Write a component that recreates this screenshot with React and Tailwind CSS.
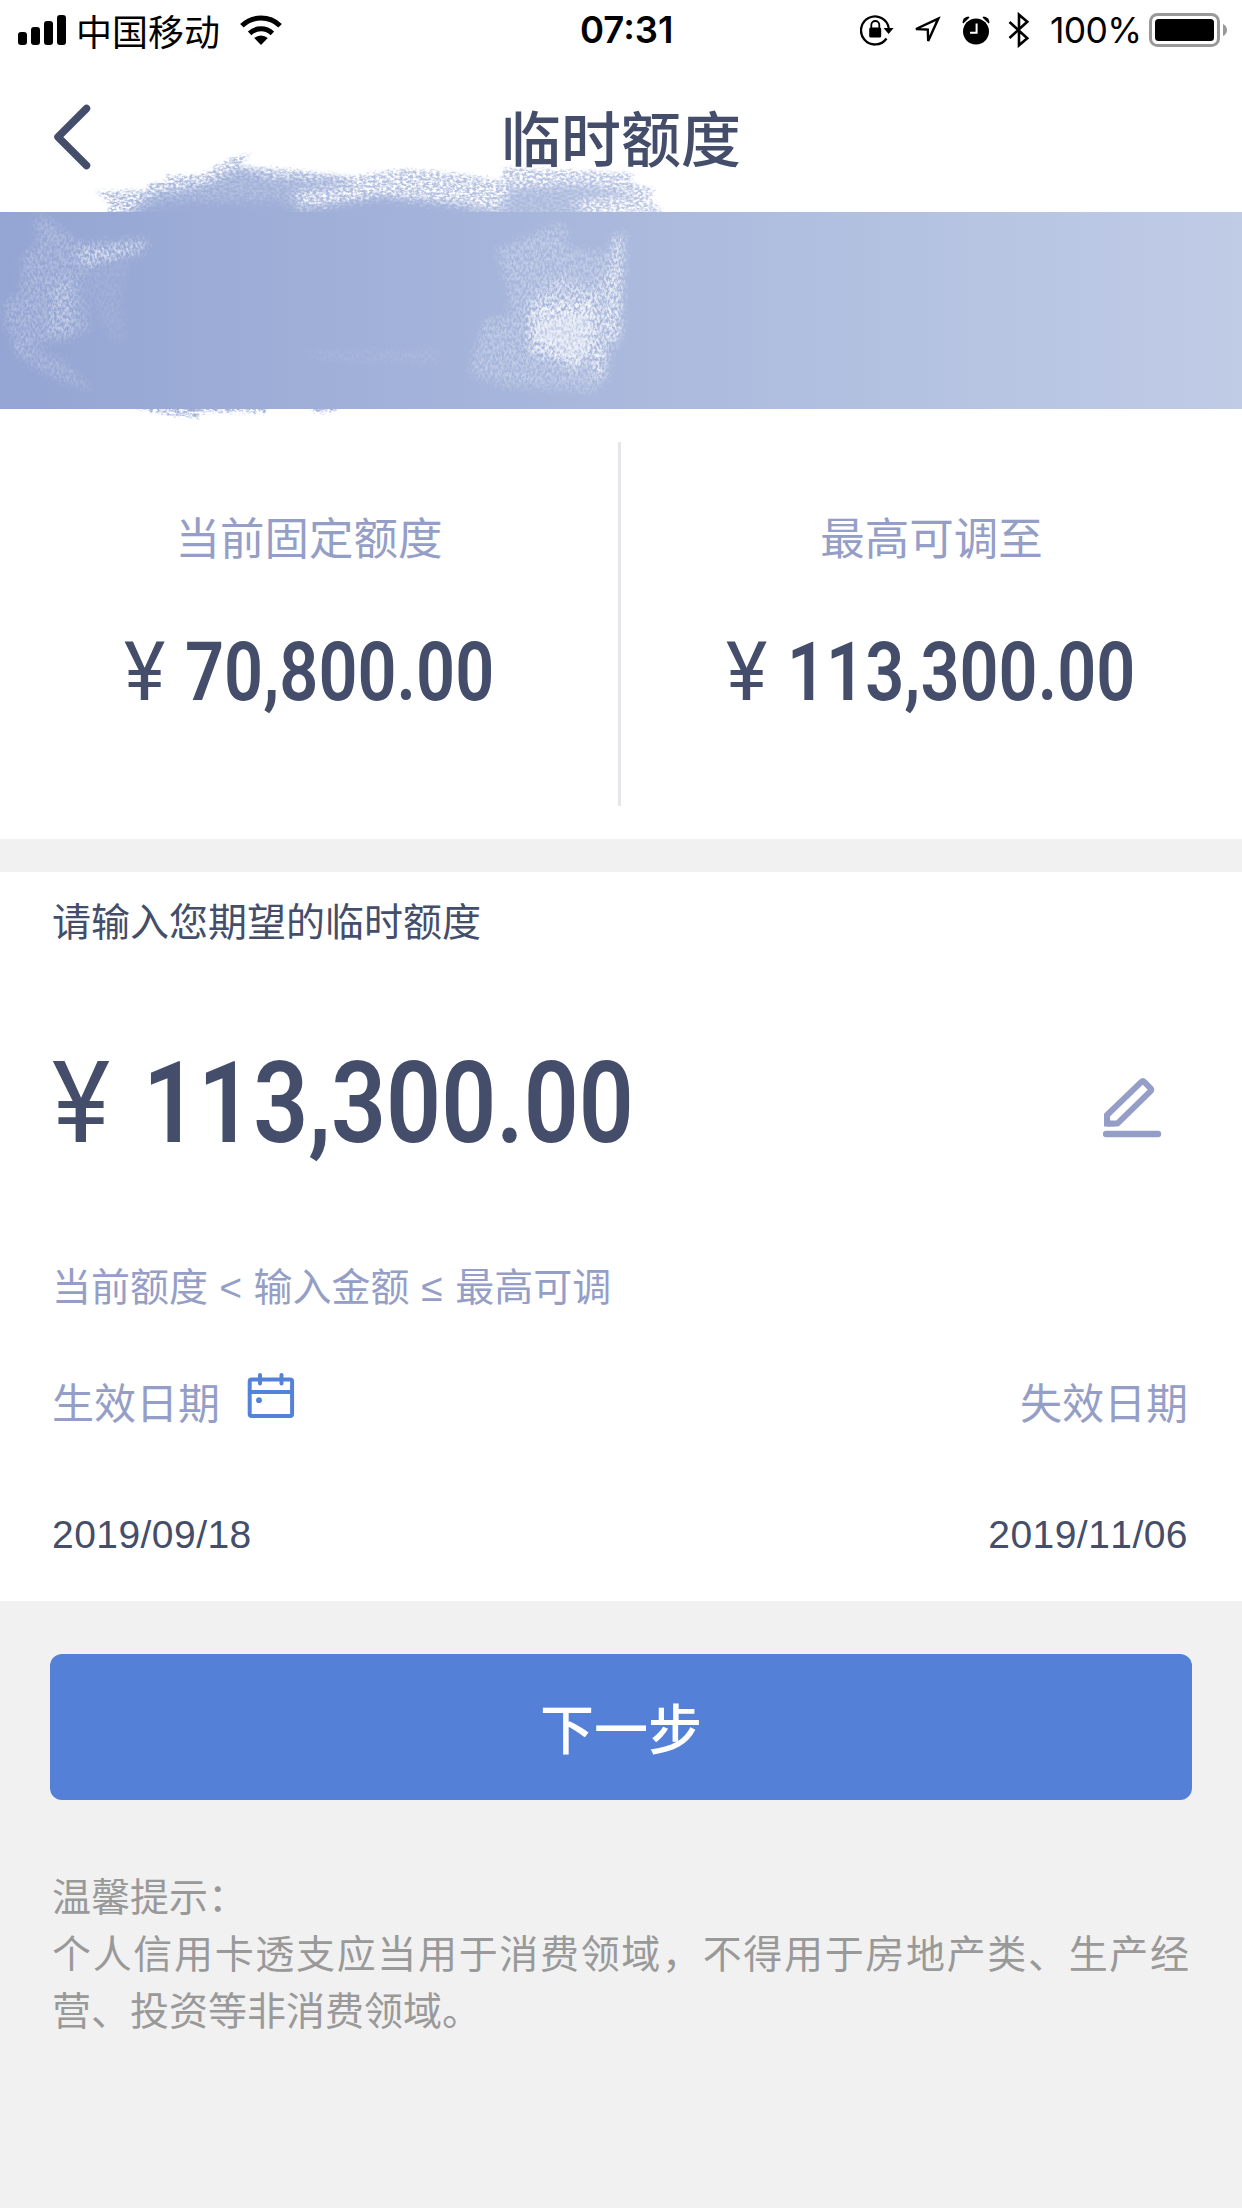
const CJK = "font-['Noto_Sans_CJK_SC',sans-serif]";

function SignalIcon() {
  return (
    <svg className="h-[30px] w-[48px]" viewBox="0 0 48 30">
      <rect x="0" y="17" width="9" height="13" rx="3" />
      <rect x="13" y="12" width="9" height="18" rx="3" />
      <rect x="26" y="6" width="9" height="24" rx="3" />
      <rect x="39" y="0" width="9" height="30" rx="3" />
    </svg>
  );
}

function WifiIcon() {
  return (
    <svg className="h-[30px] w-[42px]" viewBox="0 0 42 30">
      <path d="M21 30 L14.2 23 A10.5 10.5 0 0 1 27.8 23 Z" />
      <path d="M9.6 18.4 A16.5 16.5 0 0 1 32.4 18.4" fill="none" stroke="#000" strokeWidth="5" />
      <path d="M1.9 10.8 A27.4 27.4 0 0 1 40.1 10.8" fill="none" stroke="#000" strokeWidth="5" />
    </svg>
  );
}

function RotationLockIcon() {
  return (
    <svg className="h-[32px] w-[34px]" viewBox="0 0 34 32">
      <path d="M26.5 24.5 A14 14 0 1 1 28.8 14" fill="none" stroke="#000" strokeWidth="2.3" />
      <path d="M23.5 14 H33.6 L28.6 20 Z" />
      <rect x="9.2" y="13.5" width="12" height="10" rx="1.5" />
      <path d="M11.3 14 V11 a4 4 0 0 1 8 0 V14" fill="none" stroke="#000" strokeWidth="1.8" />
    </svg>
  );
}

function LocationIcon() {
  return (
    <svg className="h-[30px] w-[30px]" viewBox="0 0 30 30">
      <path d="M26.3 3.6 L4 14 L15.8 14.6 L16.2 26 Z" fill="none" stroke="#000" strokeWidth="2.4" strokeLinejoin="miter" />
    </svg>
  );
}

function AlarmIcon() {
  return (
    <svg className="h-[29px] w-[28px]" viewBox="0 0 28 29">
      <circle cx="14" cy="15.5" r="13" />
      <path d="M0.5 6.5 A6 6 0 0 1 6.5 0.5 L7.5 1.6 L1.4 7.4 Z" />
      <path d="M27.5 6.5 A6 6 0 0 0 21.5 0.5 L20.5 1.6 L26.6 7.4 Z" />
      <path d="M14.6 7.5 V16.8 H8" fill="none" stroke="#fff" strokeWidth="2" />
    </svg>
  );
}

function BluetoothIcon() {
  return (
    <svg className="h-[36px] w-[22px]" viewBox="0 0 22 36">
      <path d="M1.5 10 L19.3 26.2 L11 33.3 V2.7 L19.3 9.8 L1.5 26" fill="none" stroke="#000" strokeWidth="2.6" />
    </svg>
  );
}

function BatteryIcon() {
  return (
    <svg className="h-[34px] w-[79px]" viewBox="0 0 79 34">
      <rect x="1.5" y="1.5" width="68" height="31" rx="7" fill="none" stroke="#999" strokeWidth="3" />
      <rect x="6" y="6" width="59" height="22" rx="3.5" />
      <path d="M74 11 Q78 13 78 17 Q78 21 74 23 Z" fill="#999" />
    </svg>
  );
}

function PencilIcon() {
  return (
    <svg className="h-[60px] w-[60px]" viewBox="0 0 60 60" fill="none" stroke="#959ec6">
      <path d="M4.1 37 L38.4 3.9 Q39.8 2.6 41.2 3.9 L47.6 10.4 Q49 11.8 47.6 13.2 L14.6 45.4 H4.1 Z" strokeWidth="6" strokeLinejoin="round" />
      <path d="M1 35 V48.4 H12 Z" fill="#959ec6" stroke="none" />
      <path d="M3 56 H55" strokeWidth="6.4" strokeLinecap="round" />
    </svg>
  );
}

function CalendarIcon() {
  return (
    <svg className="h-[46px] w-[48px]" viewBox="0 0 48 46" fill="none" stroke="#5481da" strokeWidth="4">
      <rect x="2.7" y="6.5" width="42.4" height="36.5" rx="2" />
      <path d="M3 19 H45" />
      <path d="M13 2 V10.5 M34.5 2 V10.5" strokeLinecap="round" />
      <circle cx="12" cy="27.2" r="2.9" fill="#5481da" stroke="none" />
    </svg>
  );
}

// Chalk strokes that cover the card details inside and around the banner.
function ChalkStrokes() {
  return (
    <svg className="pointer-events-none absolute -top-[70px] left-0 h-[290px] w-[700px]" viewBox="0 142 700 290">
      <defs>
        <linearGradient id="ink" gradientUnits="userSpaceOnUse" x1="0" y1="0" x2="1242" y2="0">
          <stop offset="0" stopColor="#94a5d3" />
          <stop offset="1" stopColor="#c0cce6" />
        </linearGradient>
        <filter id="chalk" x="-10%" y="-20%" width="120%" height="140%">
          <feTurbulence type="fractalNoise" baseFrequency="0.3 0.42" numOctaves="2" seed="4" result="n" />
          <feGaussianBlur in="SourceGraphic" stdDeviation="1.5" result="b" />
          <feDisplacementMap in="b" in2="n" scale="9" xChannelSelector="R" yChannelSelector="G" result="d" />
          <feColorMatrix in="n" type="matrix" values="0 0 0 0 0  0 0 0 0 0  0 0 0 0 0  0 0 3.2 0 -1.05" result="m" />
          <feComposite in="d" in2="m" operator="in" />
          <feGaussianBlur stdDeviation="0.7" />
        </filter>
        <filter id="rough" x="-10%" y="-20%" width="120%" height="140%">
          <feTurbulence type="fractalNoise" baseFrequency="0.25 0.4" numOctaves="3" seed="9" result="n" />
          <feGaussianBlur in="SourceGraphic" stdDeviation="4" result="b" />
          <feDisplacementMap in="b" in2="n" scale="12" xChannelSelector="R" yChannelSelector="G" />
        </filter>
        <filter id="dust" x="-20%" y="-20%" width="140%" height="140%">
          <feTurbulence type="fractalNoise" baseFrequency="0.42 0.26" numOctaves="3" seed="12" result="n" />
          <feGaussianBlur in="SourceGraphic" stdDeviation="4.5" result="b" />
          <feDisplacementMap in="b" in2="n" scale="10" xChannelSelector="R" yChannelSelector="G" result="d" />
          <feColorMatrix in="n" type="matrix" values="0 0 0 0 0  0 0 0 0 0  0 0 0 0 0  0 0 3 0 -1" result="m" />
          <feComposite in="d" in2="m" operator="in" />
          <feGaussianBlur stdDeviation="0.7" />
        </filter>
        <clipPath id="above"><rect x="0" y="142" width="700" height="70" /></clipPath>
      </defs>
      <g clipPath="url(#above)">
        <path
          filter="url(#chalk)"
          fill="url(#ink)"
          opacity="0.8"
          d="M96 192 L146 190 L150 184 L168 182 L166 176 L202 175 L232 158 L250 154 L238 166 L300 171 L350 177 L405 169 L470 175 L500 181 L504 168 L634 173 L630 181 L655 190 L648 198 L664 213 L106 213 L112 204 Z"
        />
        <path
          filter="url(#rough)"
          fill="url(#ink)"
          opacity="0.75"
          d="M120 222 L150 194 L205 184 L240 168 L270 176 L350 180 L350 186 L296 192 L300 206 L365 202 L440 204 L500 210 L510 188 L580 184 L640 194 L570 202 L600 222 Z"
        />
        <path filter="url(#rough)" fill="url(#ink)" d="M110 222 L170 202 L280 200 L300 214 L380 196 L460 206 L500 222 Z" />
      </g>
      <path filter="url(#chalk)" fill="url(#ink)" d="M122 404 L265 404 L266 412 L200 412 L198 418 L160 413 Z M312 404 H350 L330 412 H314 Z" />
      <g filter="url(#dust)" fill="#fff">
        <path opacity="0.24" d="M34 220 L46 216 L86 248 L146 243 L148 249 L88 266 L80 280 L90 330 L76 336 L60 340 L20 350 L4 325 L4 302 L22 290 L22 256 L38 244 Z" />
        <path opacity="0.5" d="M76 246 L148 240 L140 252 L84 268 Z" />
        <path opacity="0.25" d="M52 280 H72 V336 H50 Z M10 340 L60 360 L96 392 L56 378 L18 358 Z" />
        <path opacity="0.1" d="M80 268 L130 262 L120 300 L124 345 L110 340 L90 300 Z M300 350 H440 V364 L320 360 Z" />
        <path opacity="0.3" d="M496 250 L556 224 L568 226 L564 246 L600 252 L620 250 L618 340 L602 372 L598 392 L506 386 L470 374 L484 318 L510 316 L508 290 L500 262 Z" />
        <path opacity="0.45" d="M530 296 L560 276 L590 290 L616 264 L616 336 L602 342 L596 370 L592 340 L575 368 L530 356 Z" />
        <path opacity="0.75" d="M612 240 L624 232 L620 342 L608 342 Z M592 345 H606 V378 H592 Z" />
      </g>
      <path filter="url(#dust)" fill="#fff" opacity="0.65" d="M530 306 L596 296 L596 346 L576 372 L558 356 L530 350 Z" />
      <path filter="url(#rough)" fill="#e4e9f5" opacity="0.5" d="M534 316 L590 314 L590 346 L574 366 L560 350 L540 342 Z" />
    </svg>
  );
}

function StatusBar() {
  return (
    <header className="flex h-[60px] items-center">
      <div className="flex flex-1 items-center pl-[18px]">
        <SignalIcon />
        <span className={`ml-[10px] text-[36px] leading-[58px] ${CJK}`}>中国移动</span>
        <span className="ml-[20px]"><WifiIcon /></span>
      </div>
      <span className="w-[92px] translate-x-[3px] text-center font-[Inter,sans-serif] text-[36.5px] leading-[63px] font-semibold whitespace-nowrap">07:31</span>
      <div className="flex flex-1 items-center justify-end pr-[14px]">
        <RotationLockIcon />
        <span className="ml-[18px]"><LocationIcon /></span>
        <span className="ml-[20px]"><AlarmIcon /></span>
        <span className="ml-[18px]"><BluetoothIcon /></span>
        <span className="mr-[9px] ml-[20px] w-[90px] font-[Inter,sans-serif] text-[35.5px] leading-[63px] tracking-[-0.7px] whitespace-nowrap">100%</span>
        <BatteryIcon />
      </div>
    </header>
  );
}

function LimitCard({ label, amount, cell, width }) {
  return (
    <div className={`flex flex-col items-center ${cell}`}>
      <p className={`mt-[64px] text-[44.5px] leading-[60px] text-[#959ec6] ${CJK}`}>{label}</p>
      <div className="mt-[65px] flex h-[84px] items-center font-[Roboto,sans-serif] text-[81px] leading-[84px] text-[#444e6b] [font-kerning:none]">
        <span className="inline-block w-[61px] origin-left scale-x-[0.97] font-normal">¥</span>
        <span className={width}>
          <span className="inline-block origin-left scale-x-[0.845] font-semibold whitespace-nowrap">{amount}</span>
        </span>
      </div>
    </div>
  );
}

export default function App() {
  return (
    <div lang="zh-CN" className="flex h-[2208px] w-[1242px] flex-col overflow-hidden bg-[#f1f1f1] text-black">
      <div className="bg-white">
        <StatusBar />
        <div className="flex h-[152px] items-start justify-between px-[52px]">
          <svg className="mt-[43px] h-[68px] w-[40px]" viewBox="0 0 40 68" fill="none" stroke="#444e6b" strokeWidth="7.5" strokeLinecap="round" strokeLinejoin="round">
            <path d="M34.5 5.5 L6 34 L34.5 62.5" />
          </svg>
          <h1 className={`text-[60px] leading-[151px] font-medium text-[#444e6b] ${CJK}`}>临时额度</h1>
          <span className="w-[40px]" />
        </div>
      </div>

      <div className="relative h-[197px] bg-linear-to-r from-[#94a5d3] to-[#c0cce6]">
        <ChalkStrokes />
      </div>

      <section className="flex h-[430px] bg-white pt-[33px]">
        <LimitCard label="当前固定额度" amount="70,800.00" cell="w-[618px]" width="w-[310px]" />
        <div className="h-[364px] w-[3px] bg-[#e6e7ee]" />
        <LimitCard label="最高可调至" amount="113,300.00" cell="flex-1" width="w-[350px]" />
      </section>

      <section className="mt-[33px] flex h-[729px] flex-col bg-white pr-[54px] pl-[52px]">
        <p className={`mt-[17px] text-[39px] leading-[60px] font-normal text-[#444e6b] ${CJK}`}>请输入您期望的临时额度</p>
        <div className="mt-[94px] flex h-[120px] items-center justify-between">
          <div className="flex font-[Roboto,sans-serif] text-[114px] leading-[120px] text-[#444e6b] [font-kerning:none]">
            <span className="inline-block w-[91px] origin-left scale-x-[0.97] font-normal">¥</span>
            <span className="inline-block origin-left scale-x-[0.846] font-semibold whitespace-nowrap">113,300.00</span>
          </div>
          <span className="mt-[9px] mr-[25px]"><PencilIcon /></span>
        </div>
        <p className={`mt-[91px] text-[39px] leading-[60px] whitespace-pre text-[#959ec6] ${CJK}`}>
          当前额度<span className="font-['Liberation_Sans',sans-serif] tracking-[0.3px]"> &lt; </span>输入金额<span className="font-['Liberation_Sans',sans-serif] tracking-[0.9px]"> ≤ </span>最高可调
        </p>
        <div className="mt-[53px] flex h-[60px] items-center justify-between">
          <div className="flex items-center gap-[27px]">
            <span className={`text-[42px] leading-[60px] text-[#959ec6] ${CJK}`}>生效日期</span>
            <span className="-mt-[10px]"><CalendarIcon /></span>
          </div>
          <span className={`text-[42px] leading-[60px] text-[#959ec6] ${CJK}`}>失效日期</span>
        </div>
        <div className="mt-[74px] flex justify-between font-['Liberation_Sans',sans-serif] text-[39px] leading-[60px] tracking-[0.45px] text-[#444e6b] [font-kerning:none]">
          <span>2019/09/18</span>
          <span>2019/11/06</span>
        </div>
      </section>

      <section className="px-[50px] pt-[53px]">
        <button className={`h-[146px] w-full rounded-[12px] bg-[#5480d8] pb-px text-[54px] font-medium text-white ${CJK}`}>下一步</button>
        <div className={`mt-[66px] pr-[3px] pl-[2px] text-justify text-[39px] leading-[57px] text-[#999] ${CJK}`}>
          <p>温馨提示：</p>
          <p>个人信用卡透支应当用于消费领域，不得用于房地产类、生产经营、投资等非消费领域。</p>
        </div>
      </section>
    </div>
  );
}
